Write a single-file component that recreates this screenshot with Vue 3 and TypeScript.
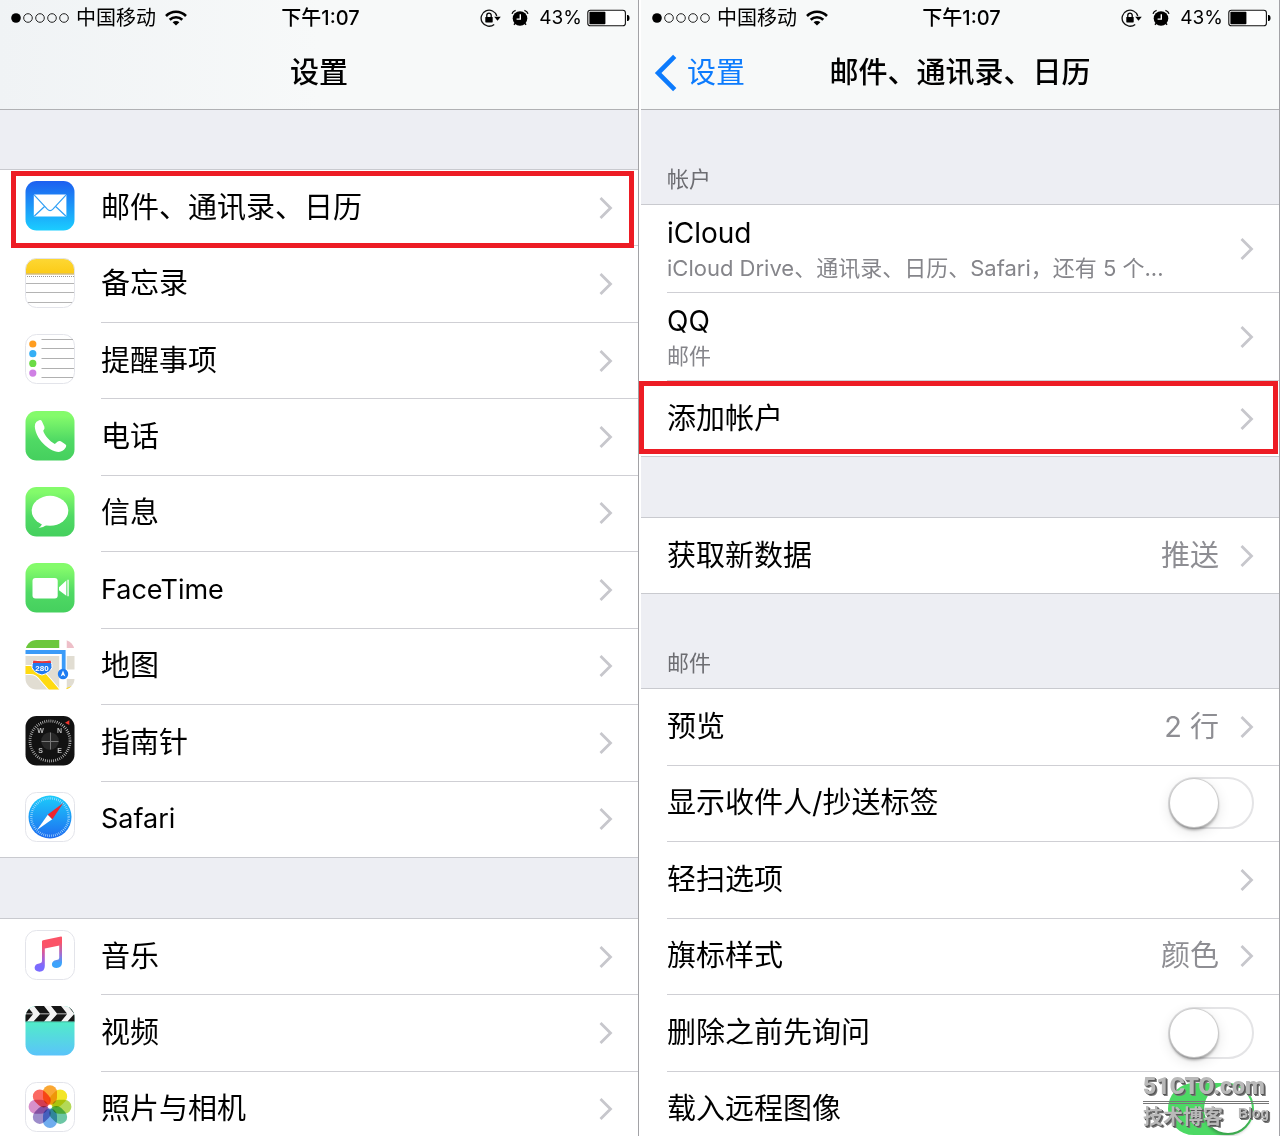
<script setup lang="ts">
import { ref } from 'vue'

interface AppEntry {
  icon: string
  label: string
  latin?: boolean
  marked?: boolean
}

interface MailOption {
  label: string
  value?: string
  toggle?: boolean
  on?: boolean
}

const screens = ['settings', 'mail'] as const

const appGroups: { size: string; items: AppEntry[] }[] = [
  {
    size: 'nine',
    items: [
      { icon: 'mail', label: '邮件、通讯录、日历', marked: true },
      { icon: 'notes', label: '备忘录' },
      { icon: 'reminders', label: '提醒事项' },
      { icon: 'phone', label: '电话' },
      { icon: 'messages', label: '信息' },
      { icon: 'facetime', label: 'FaceTime', latin: true },
      { icon: 'maps', label: '地图' },
      { icon: 'compass', label: '指南针' },
      { icon: 'safari', label: 'Safari', latin: true },
    ],
  },
  {
    size: 'three',
    items: [
      { icon: 'music', label: '音乐' },
      { icon: 'videos', label: '视频' },
      { icon: 'photos', label: '照片与相机' },
    ],
  },
]

const accounts = [
  { name: 'iCloud', detail: 'iCloud Drive、通讯录、日历、Safari，还有 5 个...' },
  { name: 'QQ', detail: '邮件' },
]

const mailOptions = ref<MailOption[]>([
  { label: '预览', value: '2 行' },
  { label: '显示收件人/抄送标签', toggle: true, on: false },
  { label: '轻扫选项' },
  { label: '旗标样式', value: '颜色' },
  { label: '删除之前先询问', toggle: true, on: false },
  { label: '载入远程图像', toggle: true, on: true },
])

const reminderDots = ['#ff9d1f', '#35aff5', '#6bdb46', '#cf80e4']
const petals = ['#fa9d1c', '#f2e30f', '#abd545', '#5cc09a', '#5fa3ec', '#927fc4', '#d383c6', '#fb5a52']
</script>

<template>
  <main class="page">
    <section v-for="screen in screens" :key="screen" class="screen">
      <header class="nav">
        <div class="status">
          <div class="status-left">
            <svg class="dots" width="58" height="10" viewBox="0 0 58 10">
              <circle cx="5" cy="5" r="4.8" fill="#000" />
              <circle v-for="n in 4" :key="n" :cx="5 + n * 12" cy="5" r="4.3" fill="none" stroke="#222" />
            </svg>
            <span>中国移动</span>
            <svg class="wifi" width="22" height="16" viewBox="0 0 22 16" fill="none" stroke="#000" stroke-width="2.6">
              <path d="M1 6a14 14 0 0 1 20 0" />
              <path d="M4.7 9.8a9 9 0 0 1 12.6 0" />
              <path d="M11 15.6 7.6 12.3a4.9 4.9 0 0 1 6.8 0z" fill="#000" stroke="none" />
            </svg>
          </div>
          <time class="clock">下午1:07</time>
          <div class="status-right">
            <svg width="22" height="18" viewBox="0 0 22 18">
              <path d="M14.2 15.4A8 8 0 1 1 16.8 7" fill="none" stroke="#111" stroke-width="1.3" />
              <path d="M14.2 7.8h6.6l-3.3 4z" fill="#000" />
              <rect x="5.3" y="8" width="7.4" height="5.4" rx=".6" fill="#000" />
              <path d="M6.8 8V6.3a2.2 2.2 0 0 1 4.4 0V8" fill="none" stroke="#000" stroke-width="1.3" />
            </svg>
            <svg class="alarm" width="18" height="18" viewBox="0 0 18 18">
              <circle cx="9" cy="9.5" r="7.3" fill="#000" />
              <path d="m4 14.400-1 1.400M14 14.400l1 1.400" stroke="#000" stroke-width="1.500" />
              <path d="M1 4.800A5 5 0 0 1 4.600 1.300M17 4.800a5 5 0 0 0-3.600-3.500" fill="none" stroke="#000" stroke-width="1.300" />
              <path d="M9.3 5.2v4.900H5.600" fill="none" stroke="#fff" stroke-width="1.400" />
            </svg>
            <span class="percent">43%</span>
            <svg width="43" height="18" viewBox="0 0 43 18">
              <rect x=".8" y="1.2" width="37.6" height="15.6" rx="2.6" fill="#fff" stroke="#111" stroke-width="1.1" />
              <rect x="2.4" y="2.8" width="16" height="12.4" rx=".8" fill="#000" />
              <path d="M40 6h1.2q1.4 1 1.4 3t-1.4 3H40z" fill="#000" />
            </svg>
          </div>
        </div>
        <div class="titlebar">
          <a v-if="screen === 'mail'" class="back" href="#settings">
            <svg width="24" height="38" viewBox="0 0 24 38" fill="none" stroke="#0c7bfd" stroke-width="4.6">
              <path d="M21.700 2.400 5.100 19l16.600 16.600" />
            </svg>
            <span>设置</span>
          </a>
          <h1>{{ screen === 'mail' ? '邮件、通讯录、日历' : '设置' }}</h1>
        </div>
      </header>

      <template v-if="screen === 'settings'">
        <template v-for="(group, g) in appGroups" :key="g">
          <div class="gap" :class="{ lead: g === 0 }"></div>
          <nav class="group" :class="group.size">
            <a v-for="item in group.items" :key="item.icon" class="row" :href="'#' + item.icon">
              <svg class="app-icon" width="50" height="50" viewBox="0 0 50 50">
                <template v-if="item.icon === 'mail'">
                  <defs>
                    <linearGradient id="g-mail" x2="0" y2="1">
                      <stop stop-color="#1d5ff0" />
                      <stop offset="1" stop-color="#1bcdff" />
                    </linearGradient>
                  </defs>
                  <rect x=".5" width="49" height="49.5" rx="11" fill="url(#g-mail)" />
                  <rect x="8.8" y="13.6" width="32.6" height="21.8" rx="1" fill="#fff" />
                  <path d="m9.3 14.2 13 14q2.800 2.800 5.600 0l13-14M9.400 35l10.400-9.800M40.800 35 30.400 25.200" fill="none" stroke="#2f9ff5" stroke-width="1.2" />
                </template>
                <template v-else-if="item.icon === 'notes'">
                  <defs>
                    <linearGradient id="g-notes" x2="0" y2="1">
                      <stop stop-color="#fdd835" />
                      <stop offset="1" stop-color="#fccb17" />
                    </linearGradient>
                    <clipPath id="c-notes"><rect x=".5" y=".5" width="49" height="49" rx="11" /></clipPath>
                  </defs>
                  <g clip-path="url(#c-notes)">
                    <path fill="#fff" d="M0 0h50v50H0z" />
                    <path fill="url(#g-notes)" d="M0 0h50v15.500H0z" />
                    <path d="M0 16h50" stroke="#bd9a3c" />
                    <path d="M0 18.500h50" stroke="#999" stroke-dasharray="1 1" />
                    <path d="M0 25.500h50M0 34.500h50M0 44.500h50" stroke="#b4b4b4" />
                  </g>
                  <rect x=".5" y=".5" width="49" height="49" rx="11" fill="none" stroke="#e3e4ea" />
                </template>
                <template v-else-if="item.icon === 'reminders'">
                  <rect x=".5" y=".5" width="49" height="49" rx="11" fill="#fff" stroke="#e3e4ea" />
                  <circle v-for="(color, i) in reminderDots" :key="color" cx="7.800" :cy="10 + i * 9.7" r="3.600" :fill="color" />
                  <path d="M16.500 5.500H48M16.500 14.500H49M16.500 24.500H49M16.500 34.500H49M16.500 43.500H48" stroke="#b0b0b0" />
                </template>
                <template v-else-if="item.icon === 'phone'">
                  <defs>
                    <linearGradient id="g-green" x2="0" y2="1">
                      <stop offset=".1" stop-color="#84fb6b" />
                      <stop offset=".6" stop-color="#4fd964" />
                      <stop offset="1" stop-color="#45d05e" />
                    </linearGradient>
                  </defs>
                  <rect x=".5" width="49" height="49.500" rx="11" fill="url(#g-green)" />
                  <path fill="#fff" d="m11.500 10.800 2.700-1.600q1.800-.7 2.800 1.200l2.400 5.400q.7 1.800-1.200 3.900c1.200 4.500 6.500 10.500 11.600 13.300l3-2.600q1.400-.9 3-.1l4.800 3.300q1.300 1.200.1 3-2.900 4.300-6.900 4.300C23.500 40.500 10.500 27.500 9.800 15.500q-.1-3.200 1.700-4.700z" />
                </template>
                <template v-else-if="item.icon === 'messages'">
                  <rect x=".5" width="49" height="49.500" rx="11" fill="url(#g-green)" />
                  <ellipse cx="25" cy="23.800" rx="18.300" ry="15" fill="#fff" />
                  <path fill="#fff" d="M17 35.500q0 3.600-3.600 5.400 5.200-.3 9-3.400z" />
                </template>
                <template v-else-if="item.icon === 'facetime'">
                  <rect x=".5" width="49" height="49.500" rx="11" fill="url(#g-green)" />
                  <rect x="7.500" y="15" width="25.200" height="20.600" rx="3" fill="#fff" />
                  <path fill="#fff" d="M34 24.200 41.300 17.500v15.300L34 27.300zM42.400 16.700h1.300v16.500h-1.300z" />
                </template>
                <template v-else-if="item.icon === 'maps'">
                  <clipPath id="c-maps"><rect x=".5" width="49" height="49.500" rx="11" /></clipPath>
                  <g clip-path="url(#c-maps)">
                    <path fill="#fff" d="M0 0h50v50H0z" />
                    <path fill="#6cc73c" d="M0 0h34.500v8H0z" />
                    <path fill="#eebfc8" d="M41.500 0H50v8h-8.500z" />
                    <path fill="#e1ddd2" d="M0 16h34.500v34H0zM41.500 16H50v13.500h-8.500zM41.500 39H50v11h-8.500z" />
                    <path d="M0 30h5c7 0 10 3 14 8 4 4.500 8 9 12 14" fill="none" stroke="#fff" stroke-width="10" />
                    <path d="M0 30h5c7 0 10 3 14 8 4 4.500 8 9 12 14" fill="none" stroke="#ffda10" stroke-width="8" />
                    <path fill="#fff" d="M34.500 0h7v50h-7z" />
                    <path fill="#ffda10" d="M41.500 48 50 45v5h-8.500z" />
                    <path d="M0 12h38.700v18" fill="none" stroke="#3b9bf8" stroke-width="3.800" />
                    <circle cx="38" cy="34" r="5.200" fill="#1e7cf2" />
                    <path fill="#fff" d="m38 30.500 2.400 6-2.400-1.500-2.400 1.500z" />
                    <path fill="#217af0" stroke="#fff" d="M8.500 20.500q8.500 1.500 17 0 2 4 1.500 7-2 5.500-10 7.500-8-2-10-7.500-.5-3 1.500-7z" />
                    <path fill="#e8353a" d="M8.500 20.500q8.500 1.500 17 0l.8 2.500H7.700z" />
                    <text x="17" y="31" class="shield">280</text>
                  </g>
                </template>
                <template v-else-if="item.icon === 'compass'">
                  <rect x=".5" width="49" height="49.500" rx="11" fill="#121212" />
                  <circle cx="25" cy="25" r="20" fill="none" stroke="#d0d0d0" stroke-width="2.800" stroke-dasharray=".7 1.394" />
                  <circle cx="25" cy="25" r="8.800" fill="#282828" />
                  <path d="M16.500 25.500h17M25.500 16.500v17" stroke="#777" />
                  <path fill="#f3352d" d="m40 6.800 4.300-2.600V9z" />
                  <g class="cardinal">
                    <text x="15.500" y="17.300">W</text>
                    <text x="34.500" y="17.300">N</text>
                    <text x="15.500" y="37">S</text>
                    <text x="34.500" y="37">E</text>
                  </g>
                </template>
                <template v-else-if="item.icon === 'safari'">
                  <defs>
                    <linearGradient id="g-safari" x2="0" y2="1">
                      <stop stop-color="#1bccfb" />
                      <stop offset="1" stop-color="#1f6cf0" />
                    </linearGradient>
                  </defs>
                  <rect x=".5" y=".5" width="49" height="49" rx="11" fill="#fff" stroke="#e3e4ea" />
                  <circle cx="25" cy="25" r="21.500" fill="url(#g-safari)" />
                  <circle cx="25" cy="25" r="18.700" fill="none" stroke="#bfe6ff" stroke-width="2.400" stroke-dasharray=".6 1.358" />
                  <path fill="#fff" d="m12 38 10.800-15.200L25 25l2.200 2.200z" />
                  <path fill="#f1232c" d="M38.300 11 22.800 22.600l4.600 4.600z" />
                </template>
                <template v-else-if="item.icon === 'music'">
                  <defs>
                    <linearGradient id="g-music" gradientUnits="userSpaceOnUse" x1="27" y1="8" x2="24" y2="42">
                      <stop offset=".25" stop-color="#fb5367" />
                      <stop offset=".6" stop-color="#b35ecb" />
                      <stop offset=".85" stop-color="#7a6bff" />
                    </linearGradient>
                    <linearGradient id="g-music-stem" gradientUnits="userSpaceOnUse" x1="0" y1="12" x2="0" y2="38">
                      <stop stop-color="#fb5367" />
                      <stop offset=".5" stop-color="#9a70d8" />
                      <stop offset=".8" stop-color="#3da3fb" />
                    </linearGradient>
                  </defs>
                  <rect x=".5" y=".5" width="49" height="49" rx="11" fill="#fff" stroke="#e3e4ea" />
                  <path fill="url(#g-music)" d="M17 11.500q0-1 1-1.300L36 6.600q1-.1 1 .9V15l-17.200 3.500V36q0 5.500-5.300 5.700-4.700-.2-4.900-3.900.2-3.700 4.600-4.300 2.800-.2 2.800-2.200z" />
                  <path fill="url(#g-music-stem)" d="M34.200 13.500 37 13v19.800q-.2 5-5.400 5.300-4.600-.2-4.700-3.900.2-3.600 4.500-4.300 2.800-.1 2.800-2z" />
                </template>
                <template v-else-if="item.icon === 'videos'">
                  <defs>
                    <linearGradient id="g-videos" x2="0" y2="1">
                      <stop offset=".3" stop-color="#51edc7" />
                      <stop offset="1" stop-color="#5ac3fb" />
                    </linearGradient>
                    <clipPath id="c-videos"><rect x=".5" width="49" height="49.500" rx="11" /></clipPath>
                  </defs>
                  <g clip-path="url(#c-videos)">
                    <path fill="url(#g-videos)" d="M0 0h50v50H0z" />
                    <path fill="#f4f4f4" d="M0 0h50v15.500H0z" />
                    <path
                      v-for="n in 4"
                      :key="n"
                      :transform="`translate(${(n - 2) * 17} 0)`"
                      fill="#161616"
                      d="M9 0h10l6 7.600H15zM15 8.200h10l-6 7.300H8.500z"
                    />
                    <path d="M0 15.800h50" stroke="#2b8f7c" stroke-width=".6" />
                  </g>
                </template>
                <template v-else>
                  <rect x=".5" y=".5" width="49" height="49" rx="11" fill="#fff" stroke="#e3e4ea" />
                  <g class="petals">
                    <rect
                      v-for="(color, i) in petals"
                      :key="color"
                      x="18"
                      y="3.300"
                      width="14"
                      height="19.500"
                      rx="7"
                      :fill="color"
                      :transform="`rotate(${i * 45} 25 24.700)`"
                    />
                  </g>
                </template>
              </svg>
              <span class="cell">
                <span class="label" :class="{ latin: item.latin }">{{ item.label }}</span>
                <svg class="chevron" width="14" height="24" viewBox="0 0 14 24"><path d="m1.500 2 10 10-10 10" /></svg>
              </span>
              <span v-if="item.marked" class="mark mark-app"></span>
            </a>
          </nav>
        </template>
      </template>

      <template v-else>
        <h2 class="heading">帐户</h2>
        <nav class="group plain">
          <a v-for="account in accounts" :key="account.name" class="row account" :href="'#' + account.name">
            <span class="cell">
              <span class="label">
                {{ account.name }}
                <small>{{ account.detail }}</small>
              </span>
              <svg class="chevron" width="14" height="24" viewBox="0 0 14 24"><path d="m1.500 2 10 10-10 10" /></svg>
            </span>
          </a>
          <a class="row" href="#add">
            <span class="cell">
              <span class="label">添加帐户</span>
              <svg class="chevron" width="14" height="24" viewBox="0 0 14 24"><path d="m1.500 2 10 10-10 10" /></svg>
            </span>
            <span class="mark mark-add"></span>
          </a>
        </nav>
        <div class="gap"></div>
        <nav class="group plain">
          <a class="row" href="#fetch">
            <span class="cell">
              <span class="label">获取新数据</span>
              <span class="value">推送</span>
              <svg class="chevron" width="14" height="24" viewBox="0 0 14 24"><path d="m1.500 2 10 10-10 10" /></svg>
            </span>
          </a>
        </nav>
        <h2 class="heading">邮件</h2>
        <div class="group plain six">
          <component
            :is="option.toggle ? 'label' : 'a'"
            v-for="option in mailOptions"
            :key="option.label"
            class="row"
            :href="option.toggle ? undefined : '#' + option.label"
          >
            <span class="cell">
              <span class="label">{{ option.label }}</span>
              <input v-if="option.toggle" v-model="option.on" class="switch" type="checkbox" />
              <template v-else>
                <span v-if="option.value" class="value">{{ option.value }}</span>
                <svg class="chevron" width="14" height="24" viewBox="0 0 14 24"><path d="m1.500 2 10 10-10 10" /></svg>
              </template>
            </span>
          </component>
        </div>
        <div class="watermark">
          <strong>51CTO.com</strong>
          <div><b>技术博客</b><i>Blog</i></div>
        </div>
      </template>
    </section>
  </main>
</template>

<style>
body {
  margin: 0;
  background: #fff;
}
</style>

<style scoped>
.page {
  display: grid;
  grid-template-columns: 1fr 1fr;
  column-gap: 2px;
  padding-right: 2px;
  font-family: Inter, 'Noto Sans CJK SC', sans-serif;
  color: #000;
}

.screen {
  position: relative;
  box-sizing: border-box;
  height: calc(100vh - 4px);
  overflow-y: clip;
  border-right: 1px solid #a2a2a6;
  background: #edeef3;
}

.nav {
  display: flex;
  flex-direction: column;
  height: 109px;
  border-bottom: 1px solid #b0b1b4;
  background: #f7f9f9;
}

.screen:first-child .nav {
  background: linear-gradient(90deg, #f0f3f5, #f7f9f9 50%);
}

.status {
  display: grid;
  grid-template-columns: 1fr auto 1fr;
  align-items: center;
  height: 35px;
  padding: 0 8px 0 11px;
  font-size: 20px;
  line-height: 24px;
}

.status-left,
.status-right {
  display: flex;
  align-items: center;
}

.status-left {
  gap: 7px;
}

.wifi {
  margin-left: 2px;
}

.status-right {
  justify-content: flex-end;
}

.alarm {
  margin: 0 10px 0 9px;
}

.percent {
  margin-right: 5px;
  font-size: 19px;
}

.clock {
  font-weight: 500;
}

.titlebar {
  display: grid;
  grid-template-columns: 1fr auto 1fr;
  align-items: center;
  height: 72px;
  padding-top: 2px;
}

h1 {
  grid-column: 2;
  margin: 0;
  font-size: 29px;
  line-height: 40px;
  font-weight: 500;
}

.back {
  grid-row: 1;
  display: flex;
  align-items: center;
  gap: 10px;
  padding-left: 12px;
  font-size: 29px;
  line-height: 40px;
  color: #0c7bfd;
  text-decoration: none;
}

.gap {
  height: 60px;
}

.gap.lead {
  height: 59px;
}

.heading {
  display: flex;
  align-items: flex-end;
  box-sizing: border-box;
  height: 94px;
  margin: 0;
  padding: 0 26px 9px;
  font-size: 22px;
  line-height: 32px;
  font-weight: 400;
  color: #6d6d72;
}

.group {
  display: grid;
  grid-auto-rows: auto;
  border-top: 1px solid #c9cacf;
  background: #fff;
}

.group.nine {
  grid-auto-rows: 1fr;
  min-height: 688px;
}

.group.six {
  grid-auto-rows: 1fr;
  min-height: 459px;
}

.group.three {
  grid-auto-rows: 1fr;
  min-height: 229px;
}

.row {
  position: relative;
  display: flex;
  gap: 26px;
  align-items: center;
  min-height: 76px;
  padding-left: 25px;
  color: inherit;
  text-decoration: none;
}

.plain .row {
  padding-left: 26px;
}

.row.account {
  min-height: 88px;
}

.row:last-child {
  border-bottom: 1px solid #c9cacf;
  min-height: 75px;
}

.app-icon {
  flex: none;
  margin-bottom: 4px;
}

.cell {
  flex: 1;
  align-self: stretch;
  display: flex;
  align-items: center;
  gap: 21px;
  min-width: 0;
  padding-right: 25px;
  border-bottom: 1px solid #cfcfd4;
}

.row:last-child .cell {
  border-bottom: 0;
}

.label {
  flex: 1;
  font-size: 29px;
  line-height: 40px;
  white-space: nowrap;
}

.label.latin {
  font-size: 27px;
}

.account .label {
  font-size: 28px;
  line-height: 38px;
}

small {
  display: block;
  font-size: 22px;
  line-height: 32px;
  color: #85858a;
}

.value {
  font-size: 29px;
  line-height: 40px;
  color: #8e8e93;
}

.chevron {
  flex: none;
  fill: none;
  stroke: #c7c7cc;
  stroke-width: 2.8;
}

.switch {
  appearance: none;
  flex: none;
  box-sizing: border-box;
  width: 86px;
  height: 52px;
  margin: 0;
  padding: 0;
  border: 2px solid #e4e4e6;
  border-radius: 26px;
  background: #fff;
}

.switch::before {
  content: '';
  display: block;
  width: 48px;
  height: 48px;
  border-radius: 50%;
  background: #fff;
  box-shadow: 0 0 1px 1px #c8c8c8, 0 3px 3px #00000059, 0 4px 14px #0000001f;
}

.switch:checked {
  border-color: #4cd964;
  background: #4cd964;
}

.switch:checked::before {
  margin-left: auto;
  box-shadow: 0 3px 3px #00000040;
}

.mark {
  position: absolute;
  border: 5px solid #ed1c24;
}

.mark-app {
  inset: 1px 4px -2px 11px;
}

.mark-add {
  inset: 0 1px 2px -2px;
}

.watermark {
  position: absolute;
  right: 10px;
  bottom: 6px;
  width: 126px;
  color: #b9b9b9;
  text-shadow: 1px 1px 0 #555, 2px 2px 0 #777;
}

.watermark strong {
  display: block;
  border-bottom: 3px double #777;
  font: 900 23px/28px Roboto, sans-serif;
}

.watermark div {
  display: flex;
  justify-content: space-between;
  font-size: 20px;
  line-height: 26px;
}

.watermark i {
  font: 700 14px/18px 'Liberation Sans', sans-serif;
}

.shield {
  font: 700 8px 'Liberation Sans', sans-serif;
  fill: #fff;
  text-anchor: middle;
}

.cardinal {
  font: 700 7px 'Liberation Sans', sans-serif;
  fill: #bbb;
  text-anchor: middle;
}

.petals {
  isolation: isolate;
}

.petals rect {
  mix-blend-mode: multiply;
  opacity: 0.9;
}
</style>
